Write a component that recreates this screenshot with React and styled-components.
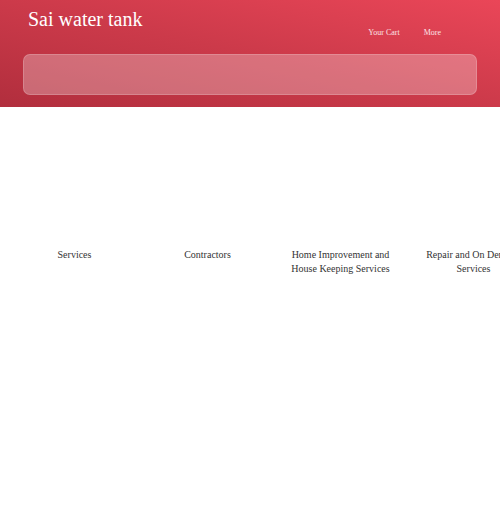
import React from "react";
import styled, { createGlobalStyle } from "styled-components";

const Global = createGlobalStyle`
  html, body { margin: 0; padding: 0; background: #fff; }
  body { font-family: "Liberation Serif", "Times New Roman", serif; }
`;

const Header = styled.header`
  height: 107px;
  box-sizing: border-box;
  padding: 0 23px;
  background: linear-gradient(to top right, #b12e3d 0%, #cc3a4a 50%, #ea4658 100%);
  display: flex;
  flex-direction: column;
`;

const TopBar = styled.div`
  display: flex;
  align-items: flex-start;
  height: 54px;
`;

const Brand = styled.h1`
  margin: 7px 0 0 5px;
  font-size: 20px;
  font-weight: normal;
  color: #fff;
  flex: 1;
  line-height: 24px;
`;

const Nav = styled.nav`
  display: flex;
  gap: 24px;
  margin: 28px 36px 0 0;
`;

const NavLink = styled.a`
  font-size: 8px;
  color: #fbe4e7;
  text-decoration: none;
  line-height: 10px;
`;

const Search = styled.div`
  height: 41px;
  box-sizing: border-box;
  border-radius: 7px;
  background: rgba(255, 255, 255, 0.28);
  border: 1px solid rgba(255, 255, 255, 0.18);
`;

const Categories = styled.div`
  display: grid;
  grid-template-columns: repeat(4, 133px);
  margin-left: 8px;
  padding-top: 141px;
  overflow: hidden;
  width: 492px;
`;

const Category = styled.div`
  text-align: center;
  font-size: 10px;
  line-height: 14px;
  color: #333;
  padding: 0 12px;
`;

const items = [
  "Services",
  "Contractors",
  "Home Improvement and House Keeping Services",
  "Repair and On Demand Services",
];

export default function App() {
  return (
    <>
      <Global />
      <Header>
        <TopBar>
          <Brand>Sai water tank</Brand>
          <Nav>
            <NavLink>Your Cart</NavLink>
            <NavLink>More</NavLink>
          </Nav>
        </TopBar>
        <Search />
      </Header>
      <Categories>
        {items.map((t) => (
          <Category key={t}>{t}</Category>
        ))}
      </Categories>
    </>
  );
}
